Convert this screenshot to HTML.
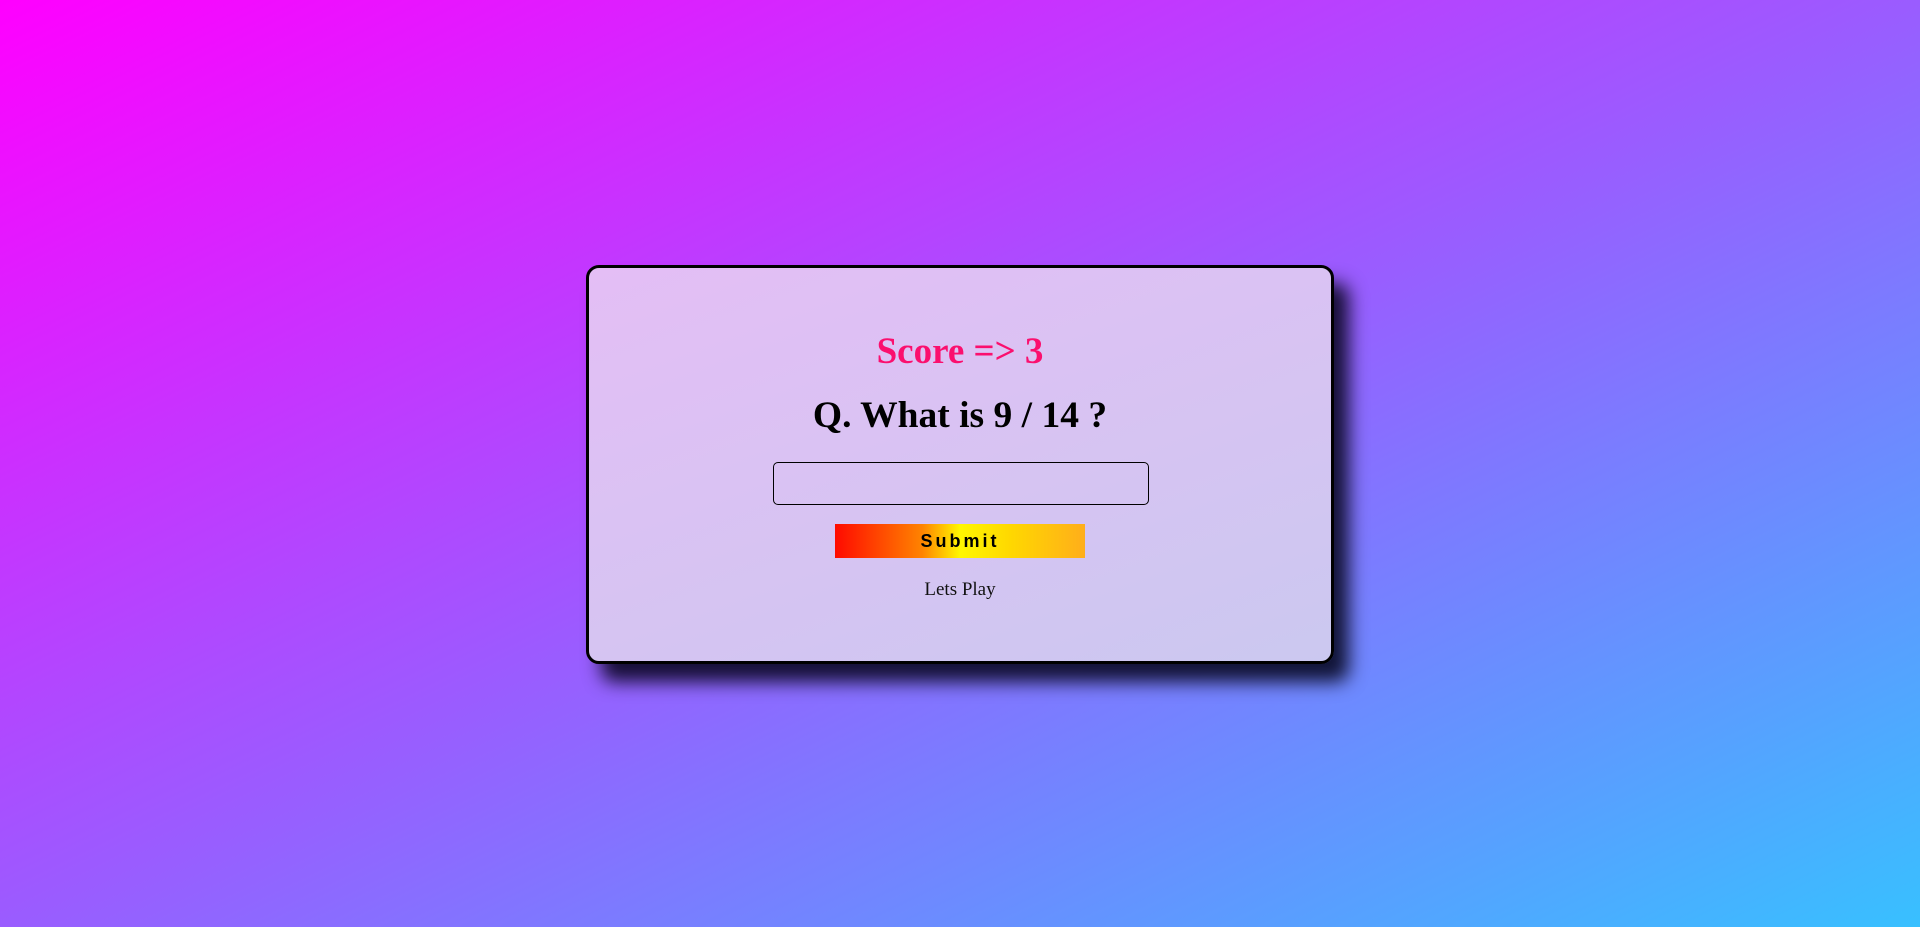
<!DOCTYPE html>
<html><head><meta charset="utf-8"><style>
html,body{margin:0;padding:0;width:1920px;height:927px;overflow:hidden}
body{background:linear-gradient(to bottom right,#ff00ff 0%,#9a5cff 50%,#38c0ff 100%);font-family:"Liberation Serif",serif;position:relative}
.card{position:absolute;left:586px;top:265px;width:742px;height:393px;border:3px solid #000;border-radius:13px;background:linear-gradient(160deg,rgba(228,190,245,1),rgba(203,200,240,1));box-shadow:15px 18px 18px rgba(0,0,20,0.85);text-align:center}
.score{position:absolute;left:0;right:0;top:65px;font-size:37px;font-weight:bold;color:#fb0f6e;line-height:1}
.q{position:absolute;left:0;right:0;top:129px;font-size:37.5px;font-weight:bold;color:#000;line-height:1}
.inp{position:absolute;left:184px;top:194px;width:376px;height:43px;border:1px solid #000;border-radius:5px;box-sizing:border-box}
.btn{position:absolute;left:246px;top:256px;width:250px;height:34px;background:linear-gradient(to right,#ff0a00 0%,#ff8400 35%,#fff700 50%,#ffd800 70%,#ffae1a 100%);font-family:"Liberation Sans",sans-serif;font-weight:bold;font-size:18px;letter-spacing:3px;line-height:34px;color:#000}
.lp{position:absolute;left:0;right:0;top:311px;font-size:19px;color:#111}
</style></head><body>
<div class="card">
<div class="score">Score =&gt; 3</div>
<div class="q">Q. What is 9 / 14 ?</div>
<div class="inp"></div>
<div class="btn">Submit</div>
<div class="lp">Lets Play</div>
</div>
</body></html>
